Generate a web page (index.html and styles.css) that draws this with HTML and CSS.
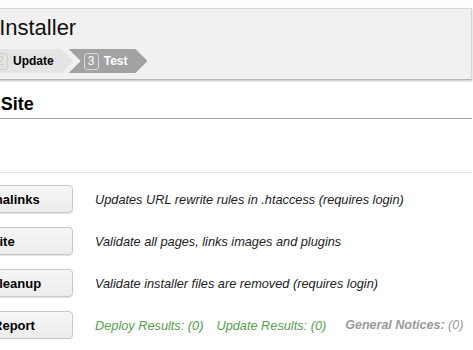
FILE: index.html
```html
<!DOCTYPE html>
<html>
<head>
<meta charset="utf-8">
<link rel="stylesheet" href="styles.css">
</head>
<body>
<div class="page">
  <div class="header">
    <div class="title">Duplicator Installer</div>
    <div class="steps">
      <div class="step done first"><span class="num">1</span><span class="lbl">Deploy</span></div>
      <div class="step done"><span class="num">2</span><span class="lbl">Update</span></div>
      <div class="step active"><span class="num">3</span><span class="lbl">Test</span></div>
    </div>
  </div>
  <div class="content">
    <div class="hdr">Test Site</div>
    <div class="panel">
      <div class="btn">Save Permalinks</div>
      <div class="desc">Updates URL rewrite rules in .htaccess (requires login)</div>
      <div class="btn">Test Site</div>
      <div class="desc">Validate all pages, links images and plugins</div>
      <div class="btn">Security Cleanup</div>
      <div class="desc">Validate installer files are removed (requires login)</div>
      <div class="btn">Get Full Report</div>
      <div class="desc results">
        <span class="ok">Deploy Results: (0)</span>
        <span class="ok">Update Results: (0)</span>
        <span class="gen"><b>General Notices:</b> (0)</span>
      </div>
    </div>
  </div>
</div>
</body>
</html>
```
FILE: styles.css
```css
html, body { margin: 0; padding: 0; background: #fff; overflow: hidden; }
body { font-family: "Liberation Sans", Arial, sans-serif; color: #000; }
.page { margin-left: -140px; margin-right: 1px; padding-top: 8px; }
.header {
  background: #f1f1f1;
  border: 1px solid #d6d6d6;
  border-bottom-color: #b5b5b5;
  box-shadow: 0 1px 2px rgba(0,0,0,0.25);
  padding: 6px 0 6px 27px;
  height: 58px;
}
.title { font-size: 22px; line-height: 26px; padding-left: 6px; color: #111; }
.steps { display: flex; margin-top: 8px; height: 24px; }
.step {
  display: flex; align-items: center; gap: 5px;
  height: 24px; padding: 0 20px 0 15px;
  font-size: 12px; font-weight: bold;
  clip-path: polygon(0 0, calc(100% - 12px) 0, 100% 50%, calc(100% - 12px) 100%, 0 100%, 12px 50%);
  margin-left: -5px;
}
.step.first { margin-left: 0; clip-path: polygon(0 0, calc(100% - 12px) 0, 100% 50%, calc(100% - 12px) 100%, 0 100%); }
.step.done { background: #e4e4e4; color: #000; }
.step.active { background: #a2a2a2; color: #fff; }
.num {
  box-sizing: border-box; width: 15px; height: 17px;
  border: 1px solid #cfcfcf; border-radius: 3px;
  display: flex; align-items: center; justify-content: center;
  font-weight: normal; font-size: 12px;
}
.step.done .num { color: #c8c8c8; }
.step.active .num { color: #fff; border-color: #d8d8d8; }
.content { padding-top: 14px; }
.hdr {
  font-size: 18px; font-weight: bold; line-height: 20px;
  padding: 0 0 4px 100px;
  border-bottom: 1px solid #a0a0a0;
}
.panel {
  margin-top: 53px;
  border-top: 1px solid #e6e6e6;
  padding: 12px 0 0 43px;
  display: grid;
  grid-template-columns: 170px 1fr;
  column-gap: 22px;
  row-gap: 14px;
  align-items: center;
}
.btn {
  box-sizing: border-box; height: 28px;
  background: linear-gradient(#f6f6f6, #ececec);
  border: 1px solid #c9c9c9; border-radius: 4px;
  box-shadow: 0 1px 1px rgba(0,0,0,0.12);
  font-size: 13px; font-weight: bold;
  display: flex; align-items: center; justify-content: center;
  white-space: nowrap;
}
.desc { font-size: 12.75px; font-style: italic; color: #222; white-space: nowrap; }
.results { display: flex; gap: 13px; }
.ok { color: #56a04a; }
.gen { color: #999; margin-left: 6px; font-size: 12.5px; }
.gen b { font-weight: bold; }
```
